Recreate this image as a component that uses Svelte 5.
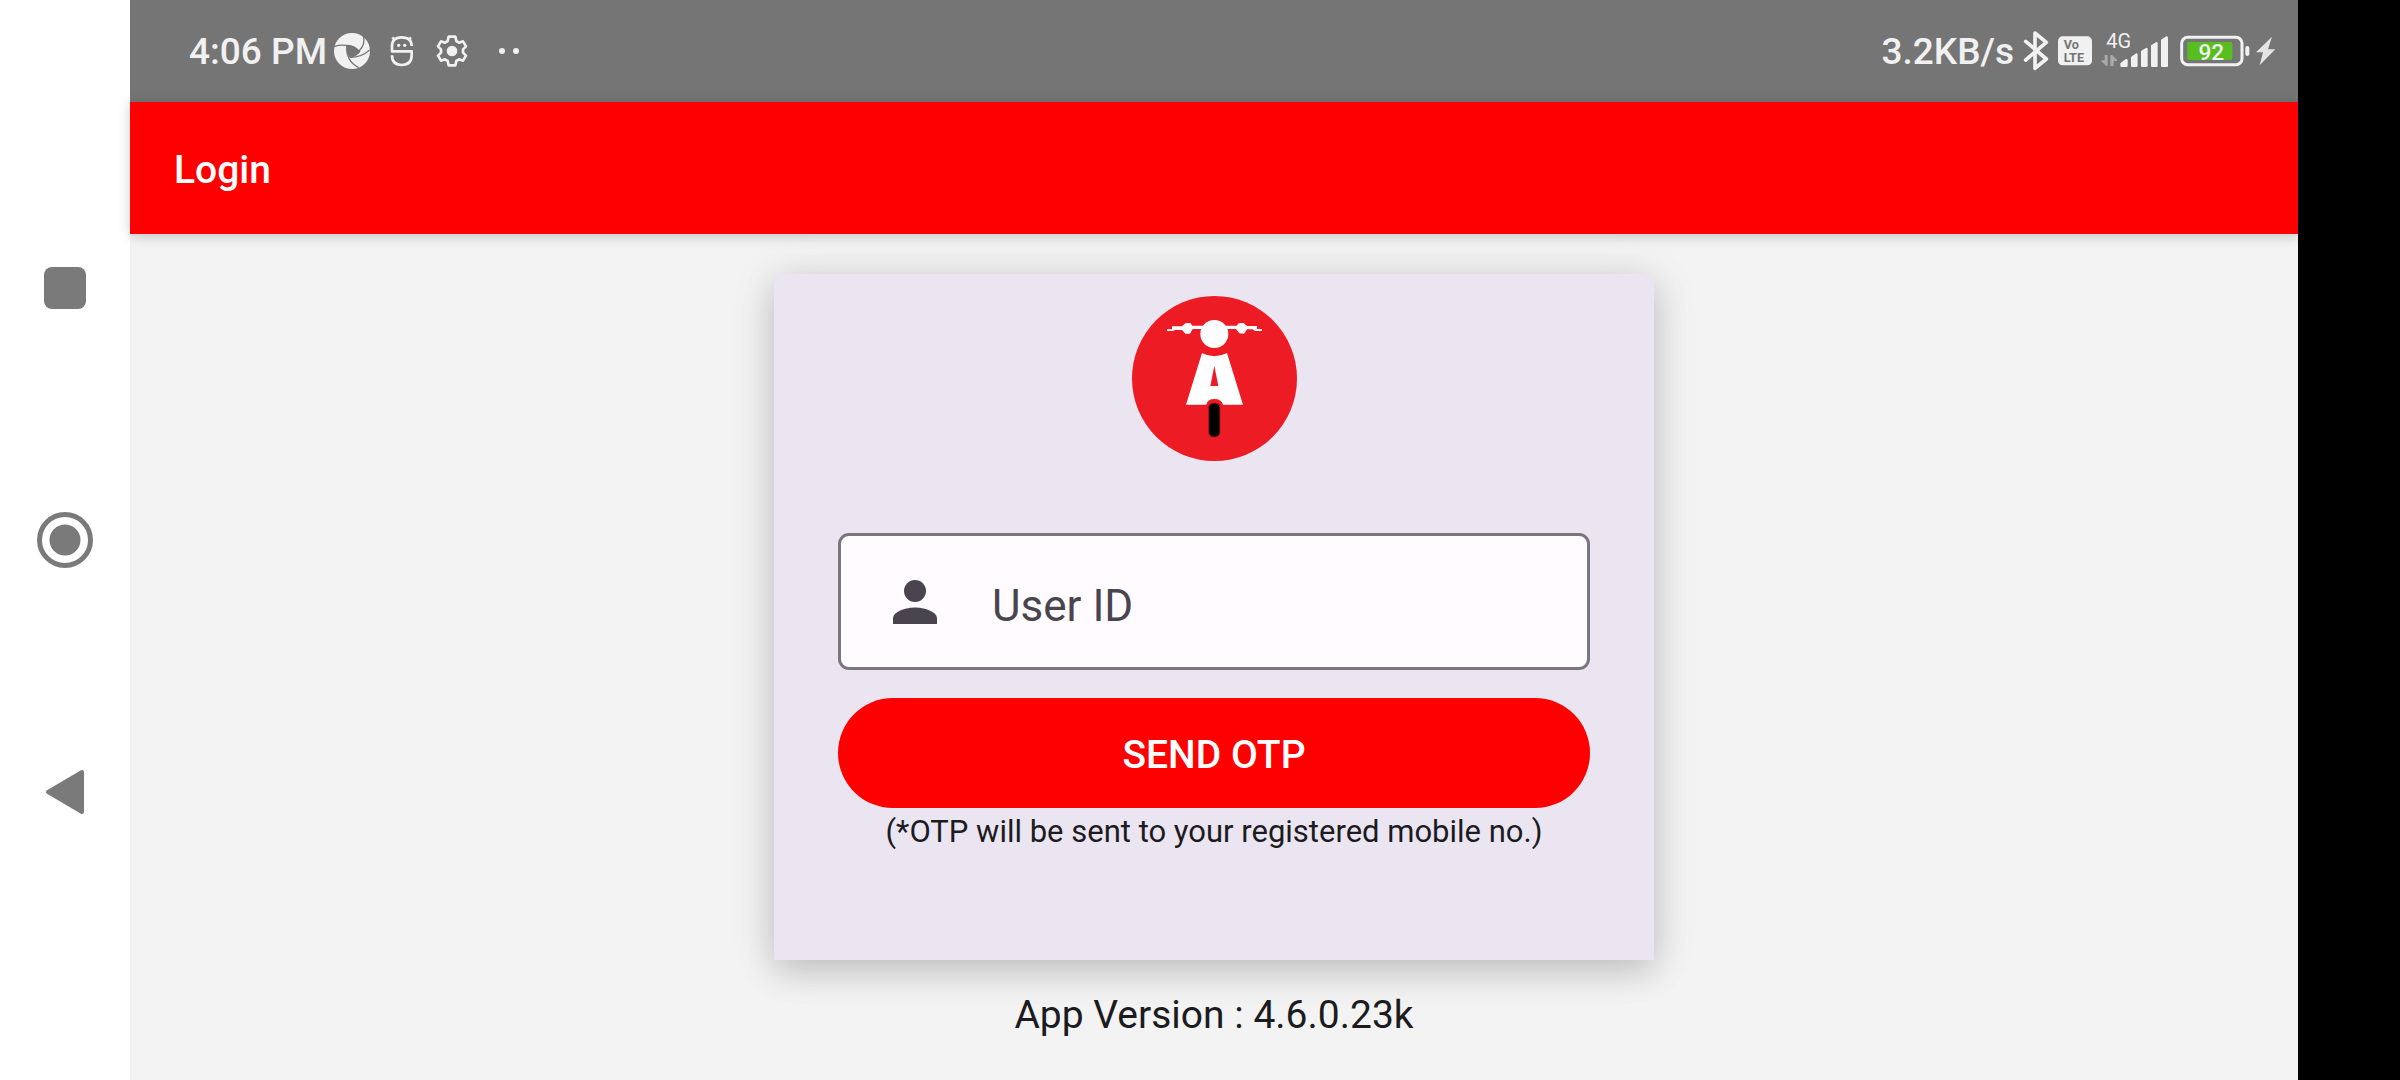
<script>
  let userId = $state('');
</script>

<div class="screen">
  <nav class="system-nav" aria-label="System navigation">
    <button type="button" aria-label="Recent apps">
      <svg width="42" height="42" viewBox="0 0 42 42"><rect width="42" height="42" rx="8" /></svg>
    </button>
    <button type="button" aria-label="Home">
      <svg width="58" height="58" viewBox="0 0 58 58">
        <circle cx="29" cy="29" r="25.5" class="ring" />
        <circle cx="29" cy="29" r="15.5" />
      </svg>
    </button>
    <button type="button" aria-label="Back">
      <svg width="42" height="48" viewBox="0 0 42 48">
        <path d="M4 24 L38 4 V44 Z" class="back" />
      </svg>
    </button>
  </nav>

  <div class="app">
    <div class="status-bar">
      <div class="status-left">
        <span class="status-text">4:06 PM</span>
        <span class="slot">
          <svg width="36" height="36" viewBox="642 99 108 108">
            <circle cx="696" cy="153" r="54" fill="#f1f1f1" />
            <g class="blade">
              <path d="M681 136 Q703 135 719 155 Q708 168 691 172 Q679 158 681 136Z" class="hole" />
              <path d="M642 140 Q684 126 719 155" />
              <path d="M730 106 Q737 134 717 153" />
              <path d="M749 150 Q726 172 691 172" />
              <path d="M681 136 Q676 182 716 203" />
              <path d="M660 186 Q678 184 691 172" stroke="none" />
            </g>
          </svg>
        </span>
        <span class="slot">
          <svg width="24" height="32" viewBox="811 105 72 96">
            <g class="line">
              <path d="M876 138 Q876 112 846 112 Q817 112 817 138 V154 H876 V166 Q876 195 846 195 Q817 195 817 166" />
              <path d="M818 112 l6 6 M874 112 l-6 6" />
            </g>
            <circle cx="837" cy="136" r="5" fill="#f1f1f1" />
            <circle cx="855" cy="136" r="5" fill="#f1f1f1" />
          </svg>
        </span>
        <span class="slot">
          <svg width="32" height="32" viewBox="948 105 96 96">
            <path
              class="line"
              d="M986 110 H1006 L1009 123 L1017 128 L1029 124 L1038 139 L1029 148 V158 L1038 167 L1029 182 L1017 178 L1009 183 L1006 196 H986 L983 183 L975 178 L963 182 L954 167 L963 158 V148 L954 139 L963 124 L975 128 L983 123 Z"
            />
            <circle cx="996" cy="153" r="16" fill="#f1f1f1" />
          </svg>
        </span>
        <span class="slot wide">
          <svg width="20" height="6" viewBox="0 0 20 6">
            <circle cx="3" cy="3" r="3" fill="#f1f1f1" />
            <circle cx="17" cy="3" r="3" fill="#f1f1f1" />
          </svg>
        </span>
      </div>

      <div class="status-right">
        <span class="status-text">3.2KB/s</span>
        <svg width="26" height="40" viewBox="483 93 78 120">
          <path class="bluetooth" d="M491 124 L553 177 L519 205 V99 L553 127 L491 180" />
        </svg>
        <svg width="34" height="30" viewBox="591 110 102 90">
          <rect x="591" y="111" width="102" height="87" rx="14" fill="#f1f1f1" />
          <text x="608" y="149" class="volte">Vo</text>
          <text x="608" y="187" class="volte">LTE</text>
        </svg>
        <svg width="70" height="44" viewBox="30 87 210 132">
          <text x="46" y="144" class="network">4G</text>
          <g fill="#a9a9a9">
            <path d="M41 165 H50 V198 H46 L31 184 V181 H41Z" />
            <path d="M58 165 H63 L78 179 V183 H68 V198 H58Z" />
          </g>
          <g fill="#f1f1f1">
            <path d="M88 190 L104 177 Q110 176 110 181 V197 Q110 201 106 201 H92 Q88 201 88 197Z" />
            <path d="M120 171 L136 160 Q140 160 140 164 V197 Q140 201 136 201 H124 Q120 201 120 197Z" />
            <path d="M150 153 L166 143 Q170 143 170 147 V197 Q170 201 166 201 H154 Q150 201 150 197Z" />
            <path d="M180 136 L196 126 Q200 126 200 130 V197 Q200 201 196 201 H184 Q180 201 180 197Z" />
            <path d="M210 119 L226 109 Q231 109 231 113 V197 Q231 201 227 201 H214 Q210 201 210 197Z" />
          </g>
        </svg>
        <svg width="96" height="32" viewBox="272 105 288 96">
          <rect x="277" y="112" width="181" height="82" rx="18" class="cell" />
          <rect x="294" y="126" width="135" height="54" rx="6" fill="#58be1f" />
          <rect x="468" y="138" width="12" height="30" rx="6" fill="#f1f1f1" />
          <text x="366" y="180" class="charge">92</text>
          <path d="M548 110 L500 157 H521 L511 196 L558 148 H536Z" fill="#e4e4e4" />
        </svg>
      </div>
    </div>

    <header class="app-bar"><h1>Login</h1></header>

    <main>
      <form class="card" onsubmit={(e) => e.preventDefault()}>
        <svg class="logo" viewBox="66 48 495 495" role="img" aria-label="Scooter logo">
          <circle cx="313.5" cy="295.5" r="247.5" fill="#ed1c24" />
          <g fill="#fff">
            <path d="M171 148 H186 V139 H216 L226 130 L241 129 L247 137 H380 L386 130 L401 129 L411 138 H441 V147 H456 V153 H435 L428 148 H411 L402 161 L388 160 L378 147 H248 L240 161 L226 161 L216 150 H196 L187 153 H171Z" />
            <circle cx="313" cy="162" r="42" />
            <path d="M276 219 Q313 239 351 219 L399 374 H339 Q335 357 313 357 Q292 357 289 374 H228Z" />
          </g>
          <path d="M313 257 L325 318 H301Z" fill="#ed1c24" />
          <rect x="296" y="369" width="34" height="102" rx="14" class="tyre" />
        </svg>

        <label class="field">
          <svg width="44" height="44" viewBox="0 0 44 44" aria-hidden="true">
            <circle cx="22" cy="11" r="11" />
            <path d="M0 44 V38.5 C0 31 14 27.5 22 27.5 C30 27.5 44 31 44 38.5 V44Z" />
          </svg>
          <input type="text" aria-label="User ID" placeholder="User ID" bind:value={userId} />
        </label>

        <button class="send" type="submit">SEND OTP</button>
        <p class="hint">(*OTP will be sent to your registered mobile no.)</p>
      </form>
      <p class="version">App Version : 4.6.0.23k</p>
    </main>
  </div>

  <div class="cutout"></div>
</div>

<style>
  :global(body) {
    margin: 0;
    background: #f3f3f3;
  }

  .screen {
    display: flex;
    min-height: 100vh;
    font-family: Roboto, 'Noto Sans', sans-serif;
    color: #1c1b1f;
  }

  svg {
    display: block;
    flex: none;
  }

  h1,
  p {
    margin: 0;
  }

  button {
    border: 0;
    padding: 0;
    font-family: inherit;
    cursor: pointer;
  }

  .system-nav {
    flex: 0 0 130px;
    display: flex;
    flex-direction: column;
    justify-content: center;
    gap: 194px;
    background: #fff;
  }

  .system-nav button {
    display: grid;
    place-items: center;
    height: 58px;
    background: none;
  }

  .system-nav svg {
    fill: #7a7a7a;
  }

  .system-nav .ring {
    fill: none;
    stroke: #7a7a7a;
    stroke-width: 5;
  }

  .back {
    stroke: #7a7a7a;
    stroke-width: 4;
    stroke-linejoin: round;
  }

  .app {
    flex: 1;
    min-width: 0;
    display: flex;
    flex-direction: column;
    background: #f3f3f3;
  }

  .cutout {
    flex: 0 0 102px;
    background: #000;
  }

  .status-bar {
    display: flex;
    justify-content: space-between;
    height: 102px;
    padding: 0 22px 0 59px;
    background: #757575;
  }

  .status-left,
  .status-right {
    display: flex;
    align-items: center;
  }

  .status-right {
    gap: 9px;
  }

  .status-text {
    padding-top: 2px;
    font-size: 37px;
    font-weight: 500;
    line-height: 44px;
    color: #f1f1f1;
    white-space: nowrap;
  }

  .slot {
    display: grid;
    place-items: center;
    width: 50px;
  }

  .slot.wide {
    width: 64px;
  }

  .line {
    fill: none;
    stroke: #f1f1f1;
    stroke-width: 8;
    stroke-linejoin: round;
  }

  .blade {
    fill: none;
    stroke: #757575;
    stroke-width: 4;
  }

  .blade .hole {
    fill: #757575;
  }

  .bluetooth {
    fill: none;
    stroke: #f1f1f1;
    stroke-width: 11;
    stroke-linejoin: round;
    stroke-linecap: round;
  }

  .volte {
    font-size: 38px;
    font-weight: 700;
    fill: #757575;
  }

  .network {
    font-size: 60px;
    fill: #f1f1f1;
  }

  .cell {
    fill: none;
    stroke: #f1f1f1;
    stroke-width: 9;
  }

  .charge {
    font-size: 68px;
    font-weight: 500;
    text-anchor: middle;
    fill: #f1f1f1;
  }

  .app-bar {
    display: flex;
    align-items: center;
    height: 132px;
    padding: 3px 44px 0;
    box-sizing: border-box;
    background: #f00;
    box-shadow: 0 2px 12px rgba(0, 0, 0, 0.2);
  }

  h1 {
    font-size: 39px;
    font-weight: 500;
    line-height: 46px;
    color: #fff;
  }

  main {
    flex: 1;
    display: flex;
    flex-direction: column;
    align-items: center;
    padding: 40px 24px;
  }

  .card {
    display: flex;
    flex-direction: column;
    align-items: center;
    width: 100%;
    max-width: 880px;
    box-sizing: border-box;
    padding: 22px 64px 106px;
    background: #ebe5f1;
    box-shadow:
      0 12px 32px rgba(0, 0, 0, 0.15),
      0 4px 44px rgba(0, 0, 0, 0.1);
  }

  .logo {
    width: 165px;
    height: 165px;
    margin-bottom: 72px;
  }

  .tyre {
    stroke: #b5151b;
    stroke-width: 3;
  }

  .field {
    display: flex;
    align-items: center;
    gap: 55px;
    width: 100%;
    height: 137px;
    margin-bottom: 28px;
    padding: 0 52px;
    box-sizing: border-box;
    border: 3px solid #7a757f;
    border-radius: 11px;
    background: #fffbff;
    cursor: text;
  }

  .field svg {
    fill: #49454f;
  }

  .field input {
    flex: 1;
    min-width: 0;
    height: 60px;
    padding: 8px 0 0;
    border: 0;
    outline: 0;
    background: none;
    font-family: inherit;
    font-size: 44px;
    color: #1c1b1f;
  }

  .field input::placeholder {
    color: #49454f;
    opacity: 1;
  }

  .send {
    width: 100%;
    height: 110px;
    padding-top: 4px;
    border-radius: 55px;
    background: #f00;
    font-size: 39px;
    font-weight: 500;
    color: #fff;
  }

  .hint {
    padding-top: 2px;
    font-size: 31px;
    line-height: 44px;
    text-align: center;
    white-space: nowrap;
  }

  .version {
    margin-top: 32px;
    font-size: 39px;
    line-height: 46px;
  }
</style>
